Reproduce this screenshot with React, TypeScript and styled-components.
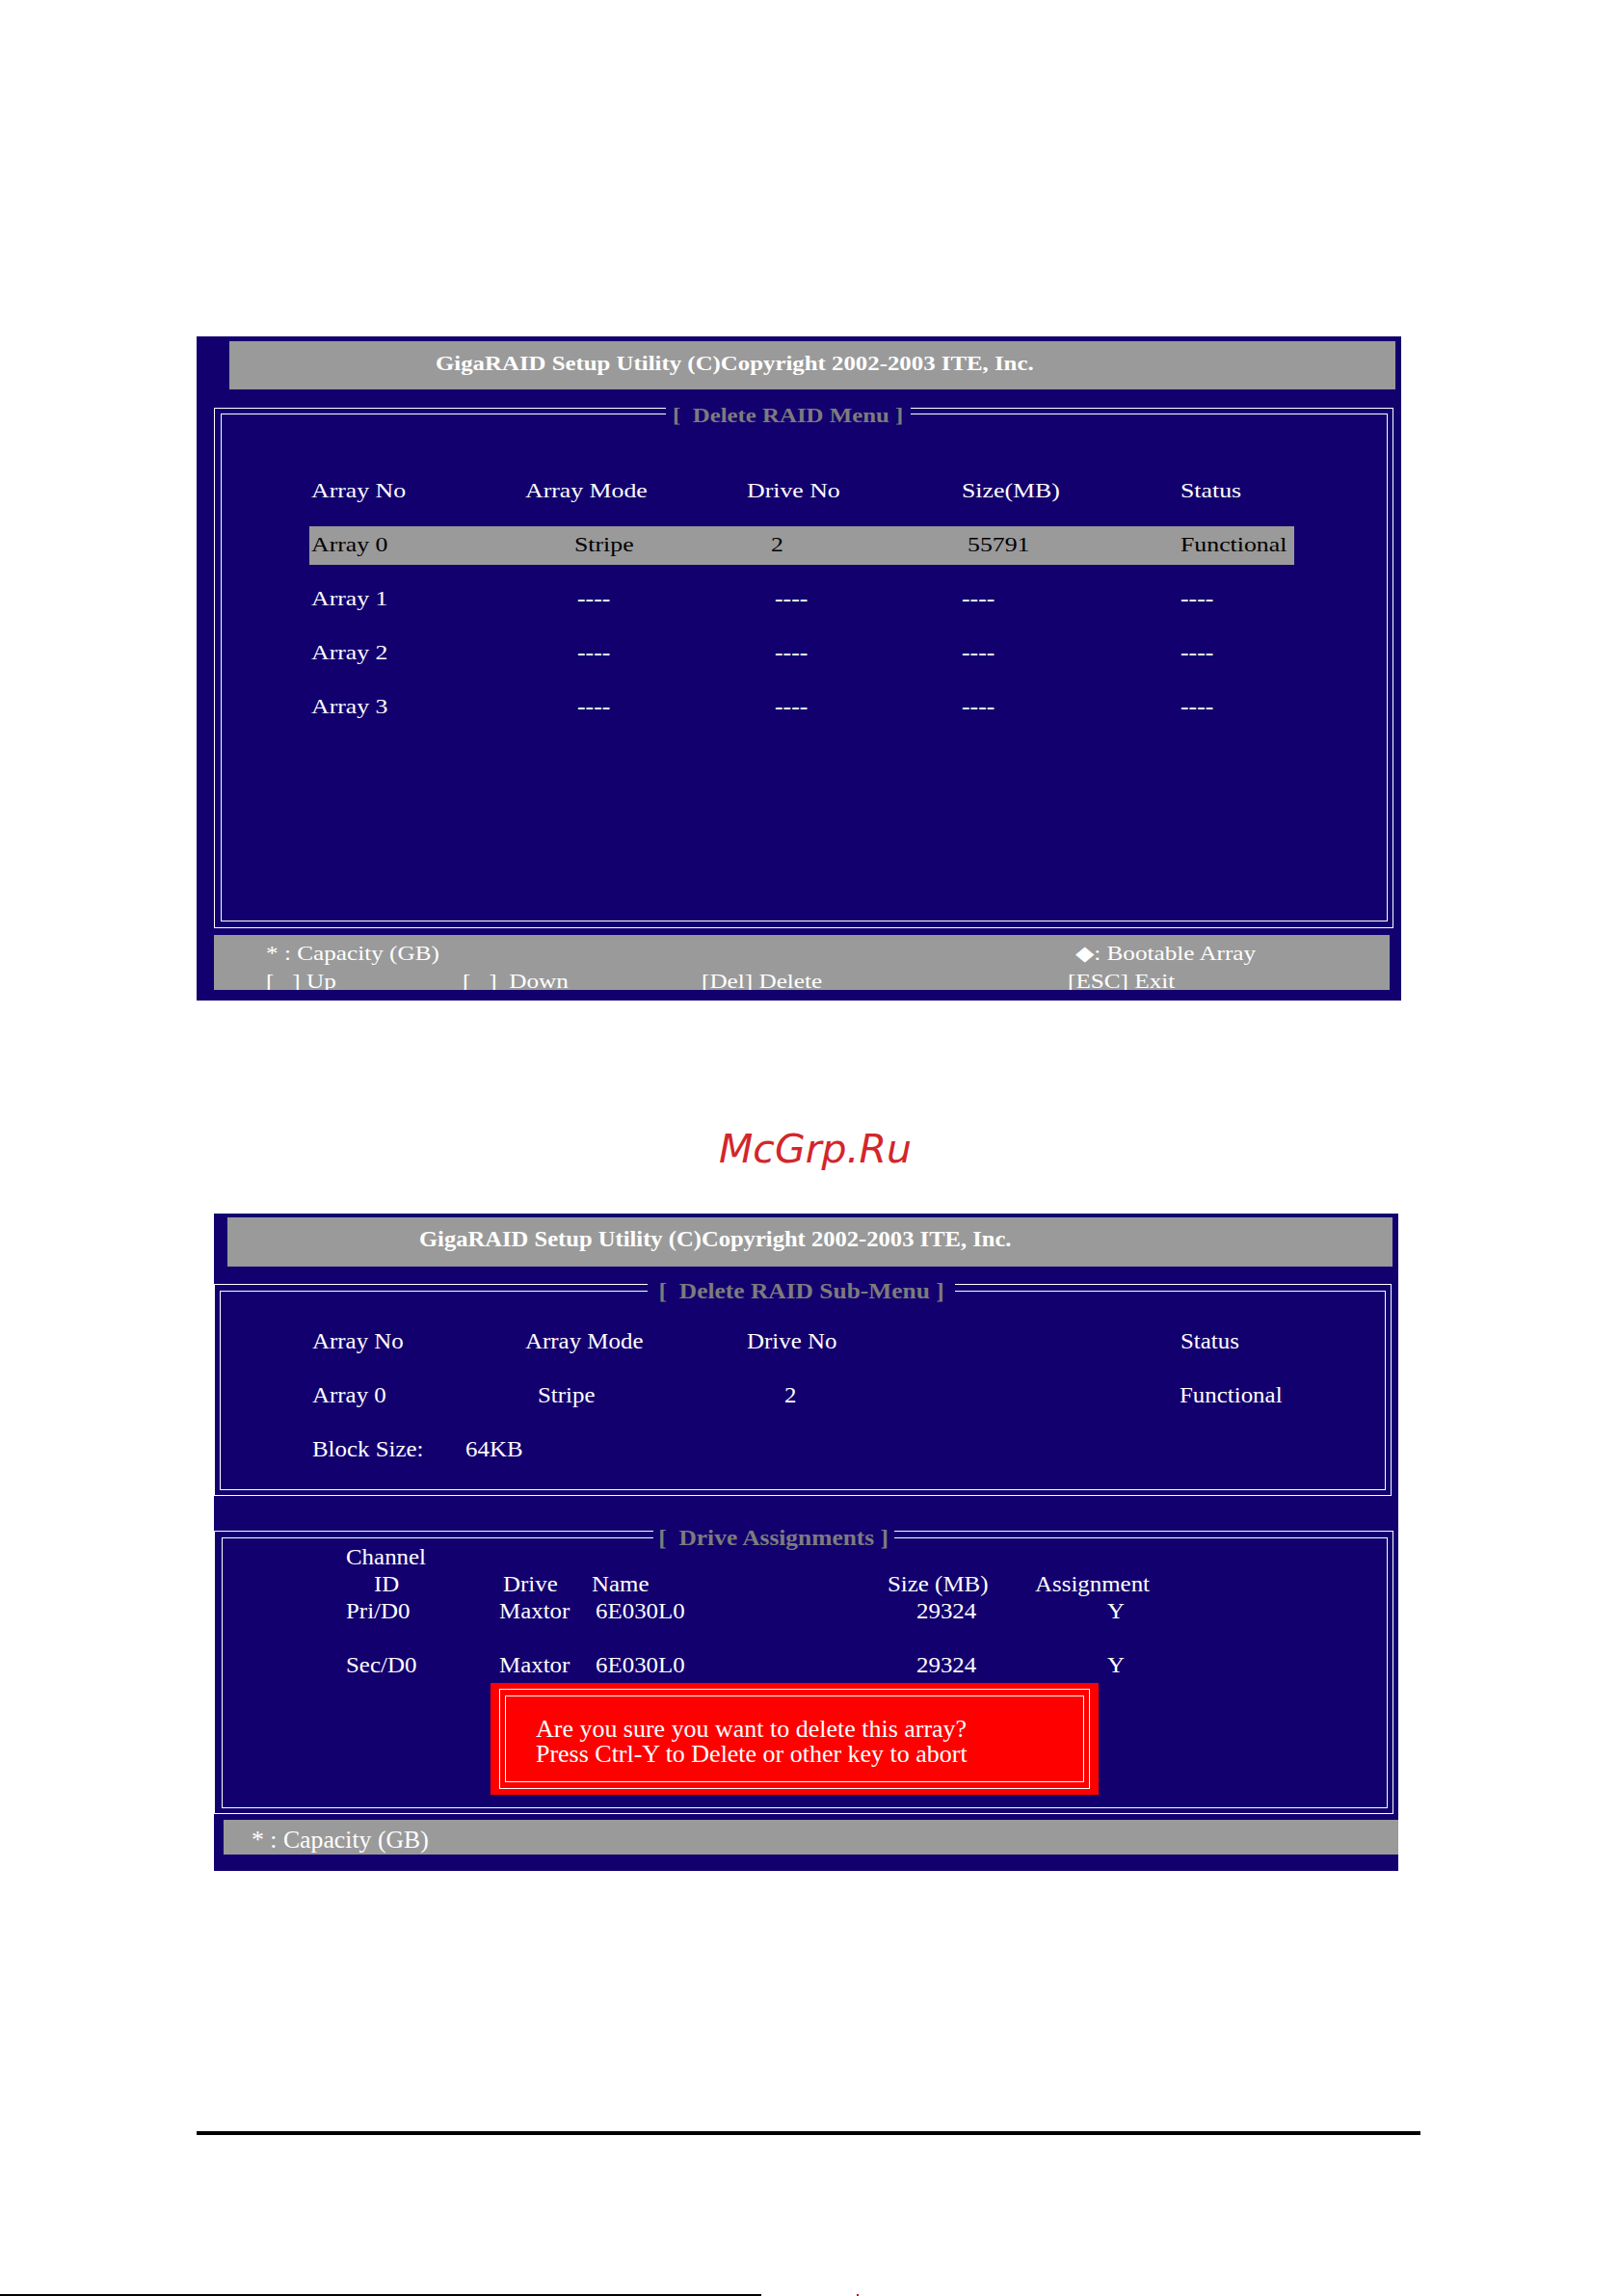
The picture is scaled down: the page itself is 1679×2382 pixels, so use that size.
import React from 'react';
import styled, { createGlobalStyle } from 'styled-components';

const NAVY = '#13006f';
const PANEL_GREY = '#9a9a9a';
const LEGEND_GREY = '#7c7c7c';

const GlobalStyle = createGlobalStyle`
  * { box-sizing: border-box; }
  html, body { margin: 0; padding: 0; background: #fff; }
  body { font-family: "Liberation Serif", "Times New Roman", serif; }
`;

const Sheet = styled.main`
  width: 1679px;
  height: 2382px;
  overflow: hidden;
  background: #fff;
  display: flex;
  flex-direction: column;
  align-items: flex-start;
`;

// BIOS captures come out wider than the font's own proportions,
// so each run of text is stretched by the screen's --sx factor
const Txt = styled.span<{ $bold?: boolean; $center?: boolean; $shift?: number }>`
  display: inline-block;
  white-space: pre;
  ${p => p.$bold && 'font-weight: bold;'}
  margin-left: ${p => p.$shift ?? 0}px;
  transform: scaleX(var(--sx, 1));
  transform-origin: ${p => (p.$center ? 'center' : 'left')} center;
`;

const Screen = styled.section<{ $top: number; $left: number; $w: number; $h: number; $sx: number; $size: number }>`
  flex: none;
  margin: ${p => p.$top}px 0 0 ${p => p.$left}px;
  width: ${p => p.$w}px;
  height: ${p => p.$h}px;
  background: ${NAVY};
  color: #fff;
  font-size: ${p => p.$size}px;
  line-height: 1;
  display: flex;
  flex-direction: column;
  align-items: flex-start;
  --sx: ${p => p.$sx};
`;

const TitleBar = styled.header<{ $top: number; $left: number; $w: number; $h: number; $indent: number; $size: number; $lift: number }>`
  flex: none;
  margin: ${p => p.$top}px 0 0 ${p => p.$left}px;
  width: ${p => p.$w}px;
  height: ${p => p.$h}px;
  padding: 0 0 ${p => p.$lift}px ${p => p.$indent}px;
  background: ${PANEL_GREY};
  font-size: ${p => p.$size}px;
  font-weight: bold;
  display: flex;
  align-items: center;
`;

const Frame = styled.div<{ $top: number; $left: number; $w: number; $h: number; $pad: string }>`
  position: relative;
  flex: none;
  margin: ${p => p.$top}px 0 0 ${p => p.$left}px;
  width: ${p => p.$w}px;
  height: ${p => p.$h}px;
  padding: ${p => p.$pad};
  border: 1px solid #fff;
  display: flex;
`;

const FrameInner = styled.div<{ $pad: string }>`
  flex: 1;
  border: 1px solid #fff;
  padding: ${p => p.$pad};
  display: flex;
  flex-direction: column;
  align-items: flex-start;
`;

// caption that cuts through both lines of the double frame
const Legend = styled.div<{ $left: number; $w: number; $top: number; $size: number }>`
  position: absolute;
  top: ${p => p.$top}px;
  left: ${p => p.$left}px;
  width: ${p => p.$w}px;
  height: 28px;
  background: ${NAVY};
  color: ${LEGEND_GREY};
  font-size: ${p => p.$size}px;
  font-weight: bold;
  display: flex;
  align-items: center;
  justify-content: center;
`;

const ArrayList = styled.div<{ $w: number }>`
  width: ${p => p.$w}px;
  display: flex;
  flex-direction: column;
  gap: 16px;
`;

const ArrayRow = styled.div<{ $cols: string; $picked?: boolean }>`
  display: grid;
  grid-template-columns: ${p => p.$cols};
  align-items: center;
  height: 40px;
  padding-left: 2px;
  background: ${p => (p.$picked ? PANEL_GREY : 'transparent')};
  color: ${p => (p.$picked ? '#000' : 'inherit')};
`;

const KeyBar = styled.footer<{ $top: number; $left: number; $w: number; $h: number; $pad: string; $size: number; $lh: number }>`
  flex: none;
  margin: ${p => p.$top}px 0 0 ${p => p.$left}px;
  width: ${p => p.$w}px;
  height: ${p => p.$h}px;
  padding: ${p => p.$pad};
  overflow: hidden;
  background: ${PANEL_GREY};
  font-size: ${p => p.$size}px;
  line-height: ${p => p.$lh}px;
`;

const KeyLine = styled.div<{ $cols: string }>`
  display: grid;
  grid-template-columns: ${p => p.$cols};
`;

const DriveLine = styled.div<{ $cols: string; $skip?: number }>`
  display: grid;
  grid-template-columns: ${p => p.$cols};
  align-items: center;
  height: 28px;
  margin-top: ${p => p.$skip ?? 0}px;
`;

const Alert = styled.div`
  flex: none;
  margin: 4px 0 0 150px;
  width: 631px;
  height: 116px;
  padding: 6px 9px;
  background: #ff0000;
  display: flex;
`;

const AlertRing = styled.div`
  flex: 1;
  border: 1px solid #fff;
  padding: 6px 5px;
  display: flex;
`;

const AlertBody = styled.div`
  flex: 1;
  border: 1px solid #fff;
  padding: 21px 0 0 31px;
  font-size: 24.5px;
  line-height: 26px;
  display: flex;
  flex-direction: column;
  align-items: flex-start;
`;

const Watermark = styled.div`
  flex: none;
  margin: 134px 0 0 746px;
  height: 40px;
  font-family: "DejaVu Sans", "Liberation Sans", sans-serif;
  font-style: oblique;
  font-size: 41px;
  line-height: 40px;
  color: #d3262b;
`;

const PageRule = styled.div`
  flex: none;
  margin: 270px 0 0 204px;
  width: 1270px;
  height: 4px;
  background: #000;
`;

const BottomEdge = styled.div`
  flex: none;
  margin-top: 165px;
  height: 2px;
  display: flex;
  gap: 99px;
`;

const EdgeLine = styled.div`
  width: 790px;
  height: 2px;
  background: #000;
`;

const EdgeTick = styled.div`
  width: 2px;
  height: 2px;
  background: #c01818;
`;

const MENU_COLS = {
  head: '222px 230px 223px 227px 1fr',
  picked: '273px 204px 204px 221px 1fr',
  empty: '276px 205px 194px 227px 1fr',
};

const SUB_COLS = {
  head: '221px 230px 450px 1fr',
  array: '234px 256px 410px 1fr',
  block: '159px 1fr',
};

const DRIVE_COLS = {
  head: '163px 92px 307px 153px 1fr',
  row: '159px 100px 333px 198px 1fr',
};

const HEADINGS = ['Array No', 'Array Mode', 'Drive No', 'Size(MB)', 'Status'];
const EMPTY_ARRAYS = ['Array 1', 'Array 2', 'Array 3'];

const drives = [
  { channel: 'Pri/D0', vendor: 'Maxtor', name: '6E030L0', size: '29324', assigned: 'Y' },
  { channel: 'Sec/D0', vendor: 'Maxtor', name: '6E030L0', size: '29324', assigned: 'Y' },
];

const COPYRIGHT = 'GigaRAID Setup Utility (C)Copyright 2002-2003 ITE, Inc.';

const DeleteMenu = () => (
  <Screen $top={349} $left={204} $w={1250} $h={689} $sx={1.2} $size={21.5}>
    <TitleBar $top={5} $left={34} $w={1210} $h={50} $indent={214} $size={20.7} $lift={4}>
      <Txt>{COPYRIGHT}</Txt>
    </TitleBar>
    <Frame $top={19} $left={18} $w={1224} $h={540} $pad="5px 5px 6px 6px">
      <Legend $left={468} $w={254} $top={-7} $size={20.7}>
        <Txt $center>[  Delete RAID Menu ]</Txt>
      </Legend>
      <FrameInner $pad="60px 0 0 91px">
        <ArrayList $w={1022}>
          <ArrayRow $cols={MENU_COLS.head}>
            {HEADINGS.map(h => <Txt key={h}>{h}</Txt>)}
          </ArrayRow>
          <ArrayRow $cols={MENU_COLS.picked} $picked>
            <Txt>Array 0</Txt>
            <Txt>Stripe</Txt>
            <Txt>2</Txt>
            <Txt>55791</Txt>
            <Txt>Functional</Txt>
          </ArrayRow>
          {EMPTY_ARRAYS.map(a => (
            <ArrayRow key={a} $cols={MENU_COLS.empty}>
              <Txt>{a}</Txt>
              <Txt $bold>----</Txt>
              <Txt $bold>----</Txt>
              <Txt $bold>----</Txt>
              <Txt $bold>----</Txt>
            </ArrayRow>
          ))}
        </ArrayList>
      </FrameInner>
    </Frame>
    <KeyBar $top={7} $left={18} $w={1220} $h={57} $pad="5px 0 0 54px" $size={21} $lh={29}>
      <KeyLine $cols="840px 1fr">
        <Txt>* : Capacity (GB)</Txt>
        <Txt>◆: Bootable Array</Txt>
      </KeyLine>
      <KeyLine $cols="204px 248px 380px 1fr">
        <Txt>[   ] Up</Txt>
        <Txt>[   ]  Down</Txt>
        <Txt>[Del] Delete</Txt>
        <Txt>[ESC] Exit</Txt>
      </KeyLine>
    </KeyBar>
  </Screen>
);

const DeleteSubMenu = () => (
  <Screen $top={47} $left={222} $w={1229} $h={682} $sx={1.06} $size={23.5}>
    <TitleBar $top={4} $left={14} $w={1209} $h={51} $indent={199} $size={23.2} $lift={6}>
      <Txt>{COPYRIGHT}</Txt>
    </TitleBar>
    <Frame $top={18} $left={0} $w={1222} $h={220} $pad="6px 5px 5px 5px">
      <Legend $left={449} $w={319} $top={-8} $size={24}>
        <Txt $center>[  Delete RAID Sub-Menu ]</Txt>
      </Legend>
      <FrameInner $pad="32px 0 0 93px">
        <ArrayList $w={1000}>
          <ArrayRow $cols={SUB_COLS.head}>
            <Txt>Array No</Txt>
            <Txt>Array Mode</Txt>
            <Txt>Drive No</Txt>
            <Txt>Status</Txt>
          </ArrayRow>
          <ArrayRow $cols={SUB_COLS.array}>
            <Txt>Array 0</Txt>
            <Txt>Stripe</Txt>
            <Txt>2</Txt>
            <Txt>Functional</Txt>
          </ArrayRow>
          <ArrayRow $cols={SUB_COLS.block}>
            <Txt>Block Size:</Txt>
            <Txt>64KB</Txt>
          </ArrayRow>
        </ArrayList>
      </FrameInner>
    </Frame>
    <Frame $top={36} $left={0} $w={1224} $h={294} $pad="6px 5px 5px 7px">
      <Legend $left={455} $w={250} $top={-8} $size={24}>
        <Txt $center>[  Drive Assignments ]</Txt>
      </Legend>
      <FrameInner $pad="6px 0 0 128px">
        <DriveLine $cols="1fr">
          <Txt>Channel</Txt>
        </DriveLine>
        <DriveLine $cols={DRIVE_COLS.head}>
          <Txt $shift={29}>ID</Txt>
          <Txt>Drive</Txt>
          <Txt>Name</Txt>
          <Txt>Size (MB)</Txt>
          <Txt>Assignment</Txt>
        </DriveLine>
        {drives.map((d, i) => (
          <DriveLine key={d.channel} $cols={DRIVE_COLS.row} $skip={i ? 28 : 0}>
            <Txt>{d.channel}</Txt>
            <Txt>{d.vendor}</Txt>
            <Txt>{d.name}</Txt>
            <Txt>{d.size}</Txt>
            <Txt>{d.assigned}</Txt>
          </DriveLine>
        ))}
        <Alert>
          <AlertRing>
            <AlertBody>
              <Txt>Are you sure you want to delete this array?</Txt>
              <Txt>Press Ctrl-Y to Delete or other key to abort</Txt>
            </AlertBody>
          </AlertRing>
        </Alert>
      </FrameInner>
    </Frame>
    <KeyBar $top={6} $left={10} $w={1219} $h={36} $pad="3px 0 0 29px" $size={24.3} $lh={36}>
      <Txt>* : Capacity (GB)</Txt>
    </KeyBar>
  </Screen>
);

export default function App() {
  return (
    <>
      <GlobalStyle />
      <Sheet>
        <DeleteMenu />
        <Watermark>McGrp.Ru</Watermark>
        <DeleteSubMenu />
        <PageRule />
        <BottomEdge>
          <EdgeLine />
          <EdgeTick />
        </BottomEdge>
      </Sheet>
    </>
  );
}
